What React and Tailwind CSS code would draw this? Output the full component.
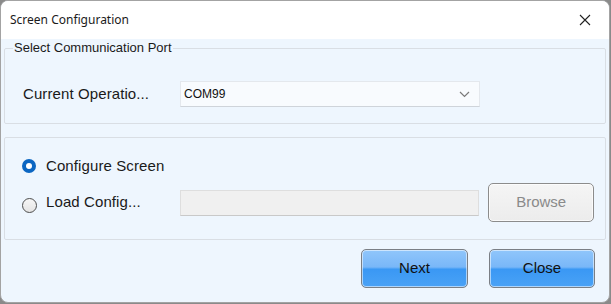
import React from "react";

function Radio({ checked }) {
  if (checked) {
    return (
      <span className="flex h-[14px] w-[14px] shrink-0 items-center justify-center rounded-full bg-[#0b66c2]">
        <span className="h-[6px] w-[6px] rounded-full bg-white" />
      </span>
    );
  }
  return (
    <span className="block h-[15px] w-[15px] shrink-0 rounded-full border border-[#4d4d4d] bg-[linear-gradient(to_bottom,#f6f6f6,#e4e4e4)]" />
  );
}

function BlueButton({ children, width }) {
  return (
    <button
      className={`flex h-[39px] ${width} items-center justify-center rounded-[5px] border border-[#7b7f85] bg-[linear-gradient(to_bottom,#90c6fb_0%,#79b7f8_46%,#3a98f4_52%,#4aa2f6_100%)] text-[15px] text-[#111] shadow-[inset_0_0_0_1px_rgba(255,255,255,0.55)]`}
    >
      {children}
    </button>
  );
}

export default function App() {
  return (
    <div className="h-[304px] w-[611px] bg-[#8a8a8a] font-['Liberation_Sans',Arial,sans-serif]">
      <div className="flex h-[303px] w-[610px] flex-col overflow-hidden rounded-[8px] border border-[#a3a3a3] bg-[#eef6fe]">
        <div className="flex h-[38px] shrink-0 items-center justify-between bg-white pl-[9px] pr-[18px]">
          <span className="font-['Noto_Sans',sans-serif] text-[12px] text-[#1a1a1a]">
            Screen Configuration
          </span>
          <svg width="12" height="12" viewBox="0 0 12 12" className="text-[#222]">
            <path d="M1 1L11 11M11 1L1 11" stroke="currentColor" strokeWidth="1.1" />
          </svg>
        </div>

        <div className="flex flex-1 flex-col px-[3px]">
          <div className="relative mt-[9px] flex h-[76px] items-center rounded-[2px] border border-[#d9dee4] pl-[18px] pr-[125px]">
            <span className="absolute left-[8px] top-[-10px] bg-[#eef6fe] px-[1px] text-[13px] leading-[18px] text-[#1a1a1a]">
              Select Communication Port
            </span>
            <span className="mt-[16px] w-[157px] text-[15px] tracking-[0.1px] text-[#1a1a1a]">Current Operatio...</span>
            <div className="mt-[16px] flex h-[26px] w-[300px] items-center justify-between border border-[#e4e8ed] border-b-[#cfd4da] bg-[#f8fbfe] pl-[3px] pr-[9px]">
              <span className="text-[12px] text-[#111]">COM99</span>
              <svg width="11" height="7" viewBox="0 0 11 7">
                <path d="M1 1L5.5 5.5L10 1" fill="none" stroke="#7a7a7a" strokeWidth="1.2" />
              </svg>
            </div>
          </div>

          <div className="mt-[13px] flex h-[103px] flex-col rounded-[2px] border border-[#d9dee4] pl-[17px] pr-[11px]">
            <div className="mt-[20px] flex h-[16px] items-center gap-[10px]">
              <Radio checked />
              <span className="text-[15px] tracking-[0.1px] text-[#1a1a1a]">Configure Screen</span>
            </div>
            <div className="mt-[9px] flex items-center">
              <div className="flex w-[159px] items-center gap-[9px]">
                <span className="mt-[6px] block">
                  <Radio />
                </span>
                <span className="text-[15px] tracking-[0.1px] text-[#1a1a1a]">Load Config...</span>
              </div>
              <div className="h-[26px] w-[300px] border border-[#dedede] border-b-[#c9c9c9] bg-[#f0f0f0]" />
              <button className="ml-[9px] flex h-[39px] w-[106px] items-center justify-center rounded-[5px] border border-[#8c8c8c] bg-[linear-gradient(to_bottom,#f5f5f5,#ececec)] text-[15px] text-[#8a8a8a] shadow-[inset_0_0_0_1px_rgba(255,255,255,0.7)]">
                Browse
              </button>
            </div>
          </div>

          <div className="mt-[9px] flex justify-end gap-[21px] pr-[11px]">
            <BlueButton width="w-[107px]">Next</BlueButton>
            <BlueButton width="w-[106px]">Close</BlueButton>
          </div>
        </div>
      </div>
    </div>
  );
}
